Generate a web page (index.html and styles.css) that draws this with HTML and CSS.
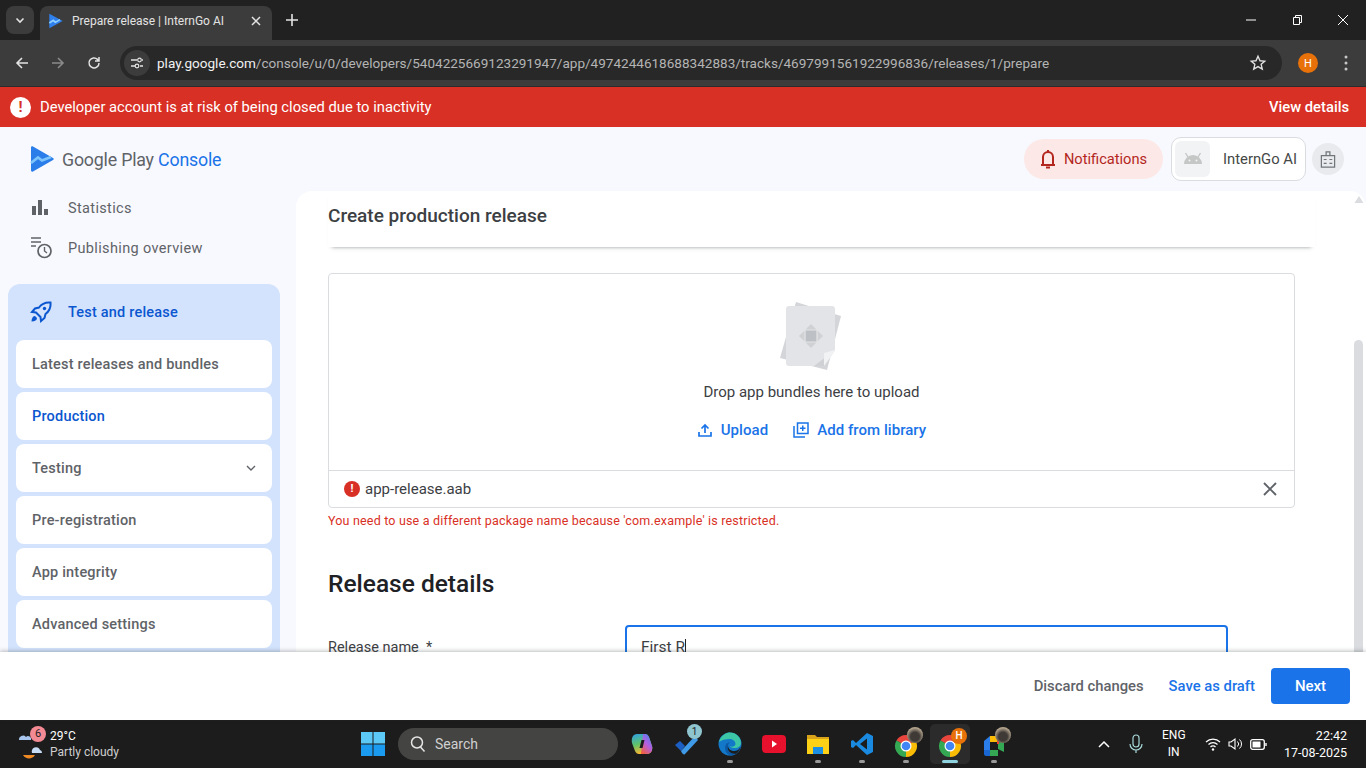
FILE: index.html
```html
<!DOCTYPE html>
<html lang="en">
<head>
    <meta charset="UTF-8">
    <title>Prepare release | InternGo AI</title>
    <link rel="stylesheet" href="styles.css">
</head>
<body>

<!-- Browser tabs -->
<div class="tabstrip">
    <div class="tab-search"><svg width="12" height="12" viewBox="0 0 12 12"><path d="M2.5 4.5 6 8l3.5-3.5" fill="none" stroke="#e3e3e3" stroke-width="1.6"/></svg></div>
    <div class="tab">
        <svg class="tab-logo" width="16" height="16" viewBox="0 0 24 24"><path d="M2 1l20 11L2 23z" fill="#2f80ed"/><path d="M2 15l6-4 3 3 7-4" fill="none" stroke="#8fd0ff" stroke-width="2.400"/></svg>
        <span class="tab-title">Prepare release | InternGo AI</span>
        <svg width="12" height="12" viewBox="0 0 12 12"><path d="M2 2l8 8M10 2l-8 8" stroke="#e3e3e3" stroke-width="1.5"/></svg>
    </div>
    <svg class="tab-new" width="14" height="14" viewBox="0 0 14 14"><path d="M7 1v12M1 7h12" stroke="#e3e3e3" stroke-width="1.6"/></svg>
    <div class="win-btns">
        <svg width="12" height="12" viewBox="0 0 12 12"><path d="M1 6h10" stroke="#fff"/></svg>
        <svg width="12" height="12" viewBox="0 0 12 12"><path d="M2.5 3.5h6v7h-6zM4.5 3.5v-2h6v7h-2" fill="none" stroke="#fff"/></svg>
        <svg width="12" height="12" viewBox="0 0 12 12"><path d="M1 1l10 10M11 1L1 11" stroke="#fff"/></svg>
    </div>
</div>

<!-- Address bar -->
<div class="toolbar">
    <svg class="nav-icon" width="16" height="16" viewBox="0 0 16 16"><path d="M14 8H3M8 3L3 8l5 5" fill="none" stroke="#e3e3e3" stroke-width="1.6"/></svg>
    <svg class="nav-icon" width="16" height="16" viewBox="0 0 16 16"><path d="M2 8h11M8 3l5 5-5 5" fill="none" stroke="#8a8a8a" stroke-width="1.6"/></svg>
    <svg class="nav-icon" width="16" height="16" viewBox="0 0 16 16"><path d="M13 8a5 5 0 1 1-1.5-3.6L13 6M13 2v4H9" fill="none" stroke="#e3e3e3" stroke-width="1.5"/></svg>
    <div class="omnibox">
        <div class="site-btn"><svg width="14" height="14" viewBox="0 0 14 14"><path d="M1 4h6M10 10h3M1 10h4M12 4h1" stroke="#e3e3e3" stroke-width="1.3"/><circle cx="9.5" cy="4" r="1.8" fill="none" stroke="#e3e3e3" stroke-width="1.2"/><circle cx="7" cy="10" r="1.8" fill="none" stroke="#e3e3e3" stroke-width="1.2"/></svg></div>
        <div class="url"><b>play.google.com</b>/console/u/0/developers/5404225669123291947/app/4974244618688342883/tracks/4697991561922996836/releases/1/prepare</div>
        <svg width="18" height="18" viewBox="0 0 24 24"><path d="M12 3l2.7 6 6.3.6-4.8 4.2 1.500 6.400L12 16.800l-5.700 3.400 1.500-6.400L3 9.600 9.300 9z" fill="none" stroke="#e3e3e3" stroke-width="1.800"/></svg>
    </div>
    <div class="avatar">H</div>
    <svg class="more" width="4" height="16" viewBox="0 0 4 16"><circle cx="2" cy="2" r="1.500" fill="#c7c7c7"/><circle cx="2" cy="8" r="1.500" fill="#c7c7c7"/><circle cx="2" cy="14" r="1.500" fill="#c7c7c7"/></svg>
</div>

<!-- Red warning -->
<div class="banner">
    <div class="banner-left">
        <div class="banner-mark">!</div>
        <span>Developer account is at risk of being closed due to inactivity</span>
    </div>
    <a class="banner-link">View details</a>
</div>

<div class="app">
    <div class="app-scroll">
        <!-- Console header -->
        <div class="header">
            <div class="brand">
                <svg width="24" height="26" viewBox="0 0 24 26"><path d="M1 1.500c0-1 1-1.500 2-1L23 12c1 .6 1 1.500 0 2L3 25.500c-1 .5-2 0-2-1z" fill="#2b7de9"/><path d="M1 17l7-5.500 4 3 9-3.500" fill="none" stroke="#7cc4fb" stroke-width="2.800"/></svg>
                <span class="brand-name">Google Play <em>Console</em></span>
            </div>
            <div class="header-right">
                <div class="notif">
                    <svg width="20" height="22" viewBox="0 0 20 22"><path d="M3 17h14M5 17V9a5 5 0 0 1 10 0v8" fill="none" stroke="#b3261e" stroke-width="2"/><path d="M10 2v2M8 19.500h4" stroke="#b3261e" stroke-width="2"/></svg>
                    <span>Notifications</span>
                </div>
                <div class="app-chip">
                    <div class="app-chip-icon"><svg width="20" height="14" viewBox="0 0 20 14"><path d="M1 12a9 9 0 0 1 18 0z" fill="#c4c7c5"/><path d="M5 5L2.500 1M15 5l2.500-4" stroke="#c4c7c5" stroke-width="1.400"/><circle cx="6.500" cy="8.500" r="1" fill="#f1f3f4"/><circle cx="13.500" cy="8.500" r="1" fill="#f1f3f4"/></svg></div>
                    <span>InternGo AI</span>
                </div>
                <div class="badge-btn"><svg width="16" height="17" viewBox="0 0 16 18"><path d="M1 5h14v12H1zM6 5V1h4v4" fill="none" stroke="#70757a" stroke-width="1.300"/><path d="M3.500 9h3M3.500 13h3M9.500 9h3M9.500 13h3" stroke="#70757a" stroke-width="1.300"/></svg></div>
            </div>
        </div>

        <div class="body-row">
            <!-- Left menu -->
            <div class="sidebar">
                <div class="side-link">
                    <svg width="20" height="20" viewBox="0 0 20 20"><path d="M2 8h4v9H2zM8 2h4v15H8zM14 11h4v6h-4z" fill="#5f6368"/></svg>
                    <span>Statistics</span>
                </div>
                <div class="side-link">
                    <svg width="24" height="24" viewBox="0 0 24 24"><path d="M1 2h10M1 6h10M1 10h5" stroke="#5f6368" stroke-width="1.600"/><circle cx="14.500" cy="15" r="6.500" fill="none" stroke="#5f6368" stroke-width="1.700"/><path d="M14.500 11v4l2.500 2" fill="none" stroke="#5f6368" stroke-width="1.400"/></svg>
                    <span>Publishing overview</span>
                </div>
                <div class="side-group">
                    <div class="group-head">
                        <svg width="22" height="22" viewBox="0 0 22 22"><path d="M20.500 1.500c-5-.5-9 1.500-11.500 5L5 7.500 2 11l4 .5 4.500 4.500.5 4 3.500-3 1-4c3.500-2.500 5.500-6.500 5-11.500z" fill="none" stroke="#0b57d0" stroke-width="2"/><circle cx="14.500" cy="7.500" r="1.700" fill="#0b57d0"/><path d="M5 15c-2 0-3.500 2-3.500 5.500C5 20.500 7 19 7 17z" fill="#0b57d0"/></svg>
                        <span>Test and release</span>
                    </div>
                    <div class="side-item">Latest releases and bundles</div>
                    <div class="side-item active">Production</div>
                    <div class="side-item">Testing <svg width="10" height="10" viewBox="0 0 10 10"><path d="M1 3l4 4 4-4" fill="none" stroke="#5f6368" stroke-width="1.400"/></svg></div>
                    <div class="side-item">Pre-registration</div>
                    <div class="side-item">App integrity</div>
                    <div class="side-item">Advanced settings</div>
                </div>
            </div>

            <!-- Main card -->
            <div class="main">
                <div class="main-inner">
                    <h2 class="page-title">Create production release</h2>
                    <div class="uploader">
                        <div class="drop">
                            <svg class="drop-art" width="62" height="69" viewBox="0 0 62 69">
                                <path d="M16 0l45 14-14 54L0 56z" fill="#d3d5d8"/>
                                <path d="M6 7c0-2 1-3 3-3h43c2 0 3 1 3 3v41L44 64H9c-2 0-3-1-3-3z" fill="#e3e4e7"/>
                                <path d="M55 48L44 64 34 64z" fill="#cfd1d4"/>
                                <path d="M55 48v1L44 64V51z" fill="#f1f2f3"/>
                                <path d="M31 22l12 12-12 12-12-12z" fill="#cfd1d4"/>
                                <path d="M25 28h12v12H25z" fill="#bdc0c4"/>
                                <path d="M19 28h24M19 40h24M25 22v24M37 22v24" stroke="#e3e4e7" stroke-width="1.200"/>
                            </svg>
                            <p class="drop-text">Drop app bundles here to upload</p>
                            <div class="drop-actions">
                                <a class="text-link"><svg width="16" height="16" viewBox="0 0 16 16"><path d="M8 11V3M4.500 6.500L8 3l3.500 3.500M2 10v4h12v-4" fill="none" stroke="#1a73e8" stroke-width="1.700"/></svg>Upload</a>
                                <a class="text-link"><svg width="16" height="16" viewBox="0 0 16 16"><path d="M4.500 1h10.500v10.500H4.500zM1 4v11h11" fill="none" stroke="#1a73e8" stroke-width="1.500"/><path d="M9.750 3.500v5.500M7 6.250h5.500" stroke="#1a73e8" stroke-width="1.500"/></svg>Add from library</a>
                            </div>
                        </div>
                        <div class="file-row">
                            <div class="file-err">!</div>
                            <span class="file-name">app-release.aab</span>
                            <svg width="14" height="14" viewBox="0 0 14 14"><path d="M1 1l12 12M13 1L1 13" stroke="#5f6368" stroke-width="1.900"/></svg>
                        </div>
                    </div>
                    <p class="file-msg">You need to use a different package name because 'com.example' is restricted.</p>
                    <h2 class="section-title">Release details</h2>
                    <div class="field-row">
                        <label class="field-label">Release name &nbsp;*</label>
                        <div class="field-input">First R<i class="caret"></i></div>
                    </div>
                </div>
                <div class="scrollbar">
                    <svg width="10" height="7" viewBox="0 0 10 7"><path d="M5 0l4.500 7H.5z" fill="#dadce0"/></svg>
                    <div class="scroll-thumb"></div>
                </div>
            </div>
        </div>
    </div>

    <!-- Bottom actions -->
    <div class="footer">
        <a class="foot-link">Discard changes</a>
        <a class="foot-link blue">Save as draft</a>
        <button class="next-btn">Next</button>
    </div>
</div>

<!-- Windows taskbar -->
<div class="taskbar">
    <div class="weather">
        <div class="weather-icon">
            <svg width="30" height="30" viewBox="0 0 30 30"><path d="M5 26a7 7 0 0 0 12 0z" fill="#f08a24"/><path d="M1 11a4 4 0 0 1 7-3 3 3 0 0 1 5 3z" fill="#a9c7ee"/><path d="M14 24a4 4 0 0 1 8-3 3 3 0 0 1 2 3z" fill="#c6dcf5"/></svg>
            <span class="weather-badge">6</span>
        </div>
        <div class="weather-text">
            <span>29°C</span>
            <span class="weather-sub">Partly cloudy</span>
        </div>
    </div>
    <div class="task-center">
        <svg class="win-logo" width="24" height="24" viewBox="0 0 24 24"><path d="M0 0h11.500v11.500H0zM12.500 0H24v11.500H12.500z" fill="#5cc8f5"/><path d="M0 12.500h11.500V24H0zM12.500 12.500H24V24H12.500z" fill="#1a9bf0"/></svg>
        <div class="task-search">
            <svg width="18" height="18" viewBox="0 0 18 18"><circle cx="8" cy="7.500" r="5.500" fill="none" stroke="#e6e6e6" stroke-width="1.500"/><path d="M11.500 12l4 4.500" stroke="#e6e6e6" stroke-width="1.500"/></svg>
            <span>Search</span>
        </div>
        <div class="task-app">
            <svg width="24" height="24" viewBox="0 0 24 24">
                <defs>
                    <linearGradient id="copilotA" x1="0" y1="0" x2="0.300" y2="1"><stop offset="0" stop-color="#2f9ee8"/><stop offset="0.550" stop-color="#5fc46a"/><stop offset="1" stop-color="#f7b733"/></linearGradient>
                    <linearGradient id="copilotB" x1="0.800" y1="0" x2="0.200" y2="1"><stop offset="0" stop-color="#4f7ff0"/><stop offset="0.500" stop-color="#b45fe0"/><stop offset="1" stop-color="#f0603f"/></linearGradient>
                </defs>
                <path d="M7 2h8c2 0 3 1 4 3l3 9c1 4-1 8-5 8H9c-2 0-3-1-4-3L2 11C1 6 3 2 7 2z" fill="url(#copilotA)"/>
                <path d="M13 2h2c2 0 3 1 4 3l3 9c1 4-1 8-5 8h-6z" fill="url(#copilotB)"/>
                <path d="M11.500 8h3l-2 8h-3z" fill="#1c1c1c"/>
            </svg>
        </div>
        <div class="task-app">
            <svg width="24" height="22" viewBox="0 0 24 22"><path d="M1 12l5-4 5 5-4 5z" fill="#1c5fc4"/><path d="M7 18L21 3l3 4L11 21c-1 1-2 1-4-3z" fill="#3f9ae8"/></svg>
            <span class="todo-badge">1</span>
        </div>
        <div class="task-app">
            <svg width="24" height="24" viewBox="0 0 24 24">
                <circle cx="12" cy="12" r="11.500" fill="#1478c8"/>
                <path d="M1 10C3 3 8 .5 12 .5c6 0 11 5 11 10.500 0 3-3 5-6 5-2 0-4-.5-5-1.500 3 .5 5.500-.5 5.500-2.500 0-3-3-5-6-5-4 0-8 1-10.500 3z" fill="#3cc6a5"/>
                <path d="M23 14c-1 5-5 9-10 9.500-4-.5-6-4-6-8 0-3 2-5 5-5.500-1 1-2 2-2 4 0 3 3 5 6 5 3 0 6-2 7-5z" fill="#0c5aa6"/>
                <path d="M10 14c0 3 3 5 6.500 5 2.500 0 5-1.500 6-4.500-.5 3-2 5.500-4 7-4 1-10-2-8.500-7.500z" fill="#1c1c1c"/>
            </svg>
            <i class="run-dot"></i>
        </div>
        <div class="task-app">
            <svg width="24" height="20" viewBox="0 0 24 20"><rect y="1" width="24" height="18" rx="4" fill="#e8112d"/><path d="M10 6.500l5 3.500-5 3.500z" fill="#fff"/></svg>
        </div>
        <div class="task-app">
            <svg width="24" height="24" viewBox="0 0 24 24"><path d="M1 3h8l2 2h12v3H1z" fill="#d9a21b"/><path d="M1 7h22v15H1z" fill="#fcd116"/><path d="M7 15h10v7H7z" fill="#1a8fe3"/></svg>
            <i class="run-dot"></i>
        </div>
        <div class="task-app">
            <svg width="24" height="24" viewBox="0 0 24 24"><path d="M17 1l6 3v16l-6 3L6 13l-3 3-2-1V9l2-1 3 3z" fill="#1a8ae0"/><path d="M17 6.500L10 12l7 5.500z" fill="#1c1c1c"/></svg>
            <i class="run-dot"></i>
        </div>
        <div class="task-app lowered">
            <svg width="24" height="24" viewBox="0 0 24 24"><path d="M12 12L2.470 6.500A11 11 0 0 1 21.530 6.500z" fill="#e8453c"/><path d="M12 12l9.530-5.500A11 11 0 0 1 12 23z" fill="#fbbc05"/><path d="M12 12v11A11 11 0 0 1 2.470 6.500z" fill="#34a853"/><circle cx="12" cy="12" r="5.500" fill="#fff"/><circle cx="12" cy="12" r="4.300" fill="#4285f4"/></svg>
            <span class="face-badge"></span>
            <i class="run-dot"></i>
        </div>
        <div class="task-app lowered current">
            <svg width="24" height="24" viewBox="0 0 24 24"><path d="M12 12L2.470 6.500A11 11 0 0 1 21.530 6.500z" fill="#e8453c"/><path d="M12 12l9.530-5.500A11 11 0 0 1 12 23z" fill="#fbbc05"/><path d="M12 12v11A11 11 0 0 1 2.470 6.500z" fill="#34a853"/><circle cx="12" cy="12" r="5.500" fill="#fff"/><circle cx="12" cy="12" r="4.300" fill="#4285f4"/></svg>
            <span class="h-badge">H</span>
            <i class="run-bar"></i>
        </div>
        <div class="task-app lowered">
            <svg width="24" height="24" viewBox="0 0 24 24"><path d="M2 7l6-5h8v6H8v8H2z" fill="#2b7de9"/><path d="M8 2h8v6H8z" fill="#fbbc05"/><path d="M2 16h6v6H4c-1 0-2-1-2-2z" fill="#1967d2"/><path d="M8 16h8v6H8z" fill="#34a853"/><path d="M16 9l6-3v12l-6-3z" fill="#34a853"/><path d="M16 5v5" stroke="#ea4335" stroke-width="2"/></svg>
            <span class="face-badge"></span>
            <i class="run-dot"></i>
        </div>
    </div>
    <div class="tray">
        <svg width="12" height="8" viewBox="0 0 12 8"><path d="M1 7l5-5 5 5" fill="none" stroke="#fff" stroke-width="1.500"/></svg>
        <svg class="tray-mic" width="14" height="20" viewBox="0 0 14 20"><rect x="4" y="1" width="6" height="12" rx="3" fill="none" stroke="#a8d8d8" stroke-width="1.200"/><path d="M1 10a6 6 0 0 0 12 0M7 16v3" fill="none" stroke="#a8d8d8" stroke-width="1.200"/></svg>
        <div class="tray-lang"><span>ENG</span><span>IN</span></div>
        <div class="tray-icons">
            <svg width="16" height="14" viewBox="0 0 16 14"><path d="M1 5a10 10 0 0 1 14 0M3.500 7.500a6.500 6.500 0 0 1 9 0M5.500 10a3.500 3.500 0 0 1 5 0" fill="none" stroke="#fff" stroke-width="1.200"/><circle cx="8" cy="12.500" r="1.200" fill="#fff"/></svg>
            <svg width="15" height="14" viewBox="0 0 15 14"><path d="M1 5v4h2l4 3V2L3 5z" fill="none" stroke="#fff" stroke-width="1.100"/><path d="M9.500 4.500a3.500 3.500 0 0 1 0 5M11.500 2.500a6 6 0 0 1 0 9" fill="none" stroke="#fff"/></svg>
            <svg width="17" height="11" viewBox="0 0 17 11"><rect x=".7" y=".7" width="13.600" height="9.600" rx="2" fill="none" stroke="#fff" stroke-width="1.300"/><rect x="2.500" y="2.500" width="8" height="6" fill="#fff"/><path d="M16 4v3" stroke="#fff" stroke-width="1.400"/></svg>
        </div>
        <div class="tray-clock"><span>22:42</span><span>17-08-2025</span></div>
    </div>
</div>

</body>
</html>
```

FILE: styles.css
```css
* {
    margin: 0;
    padding: 0;
    box-sizing: border-box;
}

html, body {
    height: 768px;
    overflow: hidden;
    font-family: Roboto, "Noto Sans", sans-serif;
    background: #1c1c1c;
}

body {
    display: flex;
    flex-direction: column;
}

svg {
    flex-shrink: 0;
    display: block;
}

/* Browser tabs */
.tabstrip {
    height: 40px;
    background: #202120;
    display: flex;
    align-items: center;
    padding: 6px 0 0 6px;
    color: #e3e3e3;
}

.tab-search {
    width: 28px;
    height: 28px;
    margin-top: -6px;
    border-radius: 8px;
    background: #3c3c3c;
    display: flex;
    align-items: center;
    justify-content: center;
}

.tab {
    width: 232px;
    height: 34px;
    margin-left: 6px;
    padding: 0 10px 4px 8px;
    background: #3c3c3c;
    border-radius: 8px 8px 0 0;
    display: flex;
    align-items: center;
}

.tab-title {
    flex: 1;
    margin-left: 8px;
    font-size: 12px;
}

.tab-new {
    margin: -6px 0 0 13px;
}

.win-btns {
    margin: -6px 17px 0 auto;
    display: flex;
    gap: 34px;
}

/* Address bar */
.toolbar {
    height: 47px;
    background: #3c3c3c;
    display: flex;
    align-items: center;
    padding: 0 0 0 14px;
    gap: 20px;
    border-bottom: 1px solid #2c2c2c;
}

.omnibox {
    width: 1162px;
    height: 34px;
    margin-left: -2px;
    background: #282828;
    border-radius: 17px;
    padding: 0 15px 0 4px;
    display: flex;
    align-items: center;
}

.site-btn {
    width: 26px;
    height: 26px;
    border-radius: 50%;
    background: #3c3c3c;
    display: flex;
    align-items: center;
    justify-content: center;
}

.url {
    flex: 1;
    margin-left: 7px;
    font-size: 13.550px;
    color: #b4b4b4;
    white-space: nowrap;
}

.url b {
    font-weight: 400;
    color: #f1f1f1;
}

.avatar {
    width: 20px;
    height: 20px;
    margin-left: -4px;
    border-radius: 50%;
    background: #e8710a;
    color: #fff;
    font-size: 11px;
    display: flex;
    align-items: center;
    justify-content: center;
}

.more {
    margin-left: 6px;
}

/* Red warning */
.banner {
    height: 40px;
    background: #d93025;
    color: #fff;
    display: flex;
    align-items: center;
    justify-content: space-between;
    padding: 0 17px 0 10px;
    font-size: 14.750px;
}

.banner-left {
    display: flex;
    align-items: center;
    gap: 9px;
}

.banner-mark {
    width: 21px;
    height: 21px;
    border-radius: 50%;
    background: #fff;
    color: #d93025;
    font-weight: 700;
    font-size: 15px;
    text-align: center;
    line-height: 21px;
}

.banner-link {
    font-weight: 500;
}

/* Console */
.app {
    height: 593px;
    display: flex;
    flex-direction: column;
    background: #f8f9fe;
}

.app-scroll {
    height: 525px;
    overflow: hidden;
}

.header {
    height: 64px;
    display: flex;
    align-items: center;
    justify-content: space-between;
    padding: 0 22px 0 30px;
}

.brand {
    display: flex;
    align-items: center;
    gap: 8px;
}

.brand-name {
    font-size: 17.800px;
    color: #5f6368;
    letter-spacing: -0.2px;
}

.brand-name em {
    font-style: normal;
    color: #1a73e8;
}

.header-right {
    display: flex;
    align-items: center;
}

.notif {
    width: 139px;
    height: 40px;
    border-radius: 20px;
    background: #fce8e6;
    color: #b3261e;
    font-size: 14.650px;
    display: flex;
    align-items: center;
    justify-content: center;
    gap: 6px;
    padding-right: 2px;
}

.app-chip {
    width: 135px;
    height: 44px;
    margin-left: 8px;
    padding: 3px;
    border: 1px solid #dadce0;
    border-radius: 10px;
    background: #fff;
    display: flex;
    align-items: center;
    gap: 13px;
    font-size: 14.800px;
    color: #444746;
}

.app-chip-icon {
    width: 35px;
    height: 36px;
    border-radius: 6px;
    background: #f1f3f4;
    display: flex;
    align-items: center;
    justify-content: center;
}

.badge-btn {
    width: 32px;
    height: 32px;
    margin-left: 6px;
    border-radius: 50%;
    background: #e8eaed;
    display: flex;
    align-items: center;
    justify-content: center;
}

.body-row {
    display: flex;
    height: 461px;
}

/* Left menu */
.sidebar {
    width: 296px;
    flex-shrink: 0;
    margin-top: -3px;
    padding: 0 16px 0 8px;
}

.side-link {
    height: 40px;
    padding-left: 22px;
    display: flex;
    align-items: center;
    gap: 16px;
    font-size: 14.500px;
    color: #5f6368;
    letter-spacing: 0.35px;
}

.side-link:nth-child(1) svg {
    margin-right: 2px;
}

.side-link:nth-child(2) {
    gap: 14px;
}

.side-group {
    margin-top: 16px;
    height: 400px;
    padding: 0 8px;
    background: #d3e3fd;
    border-radius: 12px 12px 0 0;
    display: flex;
    flex-direction: column;
    gap: 4px;
}

.group-head {
    height: 48px;
    flex-shrink: 0;
    margin-top: 4px;
    padding-left: 14px;
    display: flex;
    align-items: center;
    gap: 16px;
    font-size: 14.500px;
    font-weight: 500;
    color: #0b57d0;
    letter-spacing: 0.2px;
}

.side-item {
    height: 48px;
    flex-shrink: 0;
    padding: 0 16px;
    background: #fff;
    border-radius: 8px;
    display: flex;
    align-items: center;
    justify-content: space-between;
    font-size: 14.500px;
    font-weight: 500;
    color: #5f6368;
    letter-spacing: 0.2px;
}

.side-item.active {
    color: #0b57d0;
}

/* Main card */
.main {
    flex: 1;
    background: #fff;
    border-radius: 16px 16px 0 0;
    display: flex;
    overflow: hidden;
}

.main-inner {
    flex: 1;
    padding: 0 59px 0 32px;
}

.page-title {
    height: 56px;
    margin-right: -20px;
    font-size: 19px;
    font-weight: 500;
    line-height: 50px;
    color: #3c4043;
    box-shadow: 0 4px 4px -4px rgba(60, 64, 67, 0.55);
}

.uploader {
    margin-top: 26px;
    height: 235px;
    border: 1px solid #dadce0;
    border-radius: 4px;
}

.drop {
    height: 197px;
    border-bottom: 1px solid #dadce0;
    display: flex;
    flex-direction: column;
    align-items: center;
    padding-top: 28px;
}

.drop-art {
    margin-left: -1px;
}

.drop-text {
    margin-top: 12px;
    font-size: 15px;
    color: #3c4043;
}

.drop-actions {
    margin-top: 20px;
    display: flex;
    gap: 25px;
}

.text-link {
    display: flex;
    align-items: center;
    gap: 8px;
    font-size: 15px;
    font-weight: 500;
    letter-spacing: 0.05px;
    color: #1a73e8;
}

.file-row {
    height: 36px;
    padding: 0 17px 0 15px;
    display: flex;
    align-items: center;
    gap: 5px;
}

.file-err {
    width: 16px;
    height: 16px;
    border-radius: 50%;
    background: #d93025;
    color: #fff;
    font-size: 11px;
    font-weight: 700;
    text-align: center;
    line-height: 16px;
}

.file-name {
    flex: 1;
    font-size: 15px;
    color: #3c4043;
}

.file-msg {
    margin-top: 5px;
    font-size: 12.500px;
    color: #d93025;
    letter-spacing: 0.18px;
}

.section-title {
    margin-top: 41px;
    font-size: 24.500px;
    font-weight: 500;
    color: #202124;
}

.field-row {
    margin-top: 27px;
    display: flex;
}

.field-label {
    width: 297px;
    padding-top: 14px;
    font-size: 14.500px;
    color: #3c4043;
}

.field-input {
    width: 603px;
    height: 48px;
    padding: 11px 14px;
    border: 2px solid #1a73e8;
    border-radius: 4px;
    font-size: 15.500px;
    color: #3c4043;
}

.caret {
    display: inline-block;
    width: 1px;
    height: 16px;
    vertical-align: -3px;
    background: #202124;
}

.scrollbar {
    width: 12px;
    flex-shrink: 0;
    display: flex;
    flex-direction: column;
    align-items: flex-start;
    padding-top: 5px;
}

.scroll-thumb {
    width: 9px;
    height: 320px;
    margin-top: 137px;
    border-radius: 5px 5px 0 0;
    background: #dadce0;
}

/* Bottom actions */
.footer {
    height: 68px;
    position: relative;
    background: #fff;
    box-shadow: 0 -1px 4px rgba(60, 64, 67, 0.35);
    display: flex;
    align-items: center;
    justify-content: flex-end;
    gap: 25px;
    padding: 0 16px 0 0;
    font-size: 14.800px;
}

.foot-link {
    color: #5f6368;
    font-weight: 500;
}

.foot-link.blue {
    color: #1a73e8;
}

.next-btn {
    width: 79px;
    height: 36px;
    margin-left: -9px;
    border: none;
    border-radius: 4px;
    background: #1a73e8;
    color: #fff;
    font: 500 15px Roboto, sans-serif;
}

/* Windows taskbar */
.taskbar {
    height: 48px;
    background: #1c1c1c;
    color: #fff;
    display: flex;
    align-items: center;
    font-size: 12px;
}

.weather {
    width: 361px;
    padding-left: 18px;
    display: flex;
    align-items: center;
    gap: 3px;
}

.weather-icon {
    position: relative;
    width: 29px;
    height: 30px;
}

.weather-badge {
    position: absolute;
    top: -3px;
    left: 12px;
    width: 16px;
    height: 16px;
    border-radius: 50%;
    background: #f48a94;
    color: #222;
    font-size: 11px;
    text-align: center;
    line-height: 16px;
}

.weather-text {
    display: flex;
    flex-direction: column;
    font-size: 12px;
    line-height: 16px;
}

.weather-sub {
    color: #cfcfcf;
}

.task-center {
    display: flex;
    align-items: center;
}

.win-logo {
    margin-right: 13px;
}

.task-search {
    width: 220px;
    height: 32px;
    margin-right: 2px;
    padding-left: 11px;
    border-radius: 16px;
    background: #444442;
    color: #d0d0d0;
    font-size: 14px;
    display: flex;
    align-items: center;
    gap: 8px;
}

.task-app {
    position: relative;
    width: 44px;
    height: 40px;
    border-radius: 5px;
    display: flex;
    align-items: center;
    justify-content: center;
}

.task-app.lowered {
    padding-top: 4px;
}

.task-app.current {
    width: 40px;
    margin: 0 2px;
    background: #2b2b2b;
}

.todo-badge {
    position: absolute;
    top: 0;
    right: 6px;
    width: 15px;
    height: 15px;
    border-radius: 50%;
    background: #8fc5cf;
    color: #222;
    font-size: 10px;
    text-align: center;
    line-height: 15px;
}

.face-badge {
    position: absolute;
    top: 3px;
    right: 5px;
    width: 16px;
    height: 16px;
    border-radius: 50%;
    background: radial-gradient(circle at 50% 60%, #3f3a36 0 35%, #b5a68f 70%);
}

.h-badge {
    position: absolute;
    top: 4px;
    right: 3px;
    width: 16px;
    height: 16px;
    border-radius: 50%;
    background: #e8710a;
    font-size: 10px;
    font-weight: 500;
    text-align: center;
    line-height: 16px;
}

.run-dot {
    position: absolute;
    bottom: 1px;
    left: 50%;
    width: 6px;
    height: 3px;
    margin-left: -3px;
    border-radius: 2px;
    background: #9a9a9a;
}

.run-bar {
    position: absolute;
    bottom: 1px;
    left: 50%;
    width: 16px;
    height: 3px;
    margin-left: -8px;
    border-radius: 2px;
    background: #8fd3e0;
}

.tray {
    flex: 1;
    padding: 0 19px 0 82px;
    display: flex;
    align-items: center;
}

.tray-mic {
    margin-left: 19px;
}

.tray-lang {
    margin-left: 19px;
    display: flex;
    flex-direction: column;
    align-items: center;
    font-size: 12px;
    line-height: 17px;
}

.tray-icons {
    margin-left: 19px;
    display: flex;
    align-items: center;
    gap: 7px;
}

.tray-clock {
    margin-left: auto;
    display: flex;
    flex-direction: column;
    align-items: flex-end;
    font-size: 12.500px;
    line-height: 17px;
}
```
